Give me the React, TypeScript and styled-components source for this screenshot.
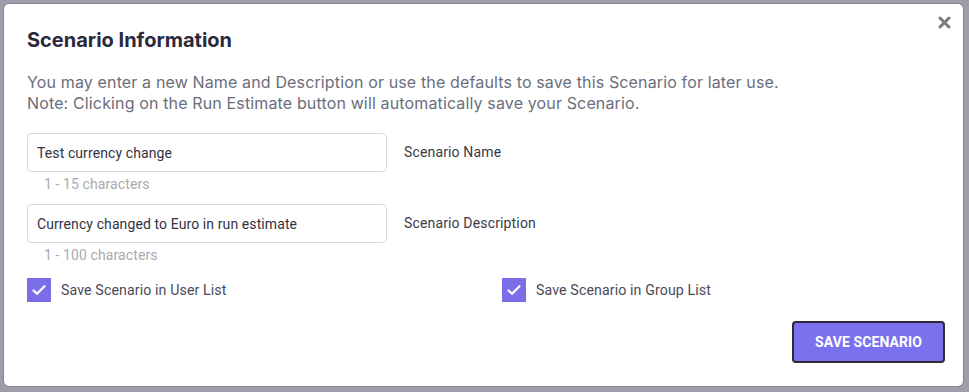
import React, { useState } from 'react';
import styled, { createGlobalStyle } from 'styled-components';

const GlobalStyle = createGlobalStyle`
  html, body {
    margin: 0;
    padding: 0;
    background: #9d9ea9;
    font-family: Roboto, "Liberation Sans", sans-serif;
  }
`;

const Backdrop = styled.div`
  width: 969px;
  height: 392px;
  box-sizing: border-box;
  padding: 4px 6px 6px 4px;
`;

const Dialog = styled.div`
  position: relative;
  box-sizing: border-box;
  width: 959px;
  height: 382px;
  background: #fff;
  border-radius: 5px;
  box-shadow: 0 0 0 1px #85868f;
  padding: 22px 18px 0 23px;
  display: flex;
  flex-direction: column;
`;

const Close = styled.button`
  position: absolute;
  top: 8px;
  right: 9px;
  border: none;
  background: none;
  padding: 0;
  width: 20px;
  height: 20px;
  display: flex;
  align-items: center;
  justify-content: center;
  cursor: pointer;
`;

const Title = styled.h2`
  margin: 0;
  font-family: Inter, Roboto, sans-serif;
  font-size: 20px;
  font-weight: 700;
  line-height: 28px;
  color: #2b2a3d;
`;

const Intro = styled.p`
  margin: 18px 0 0;
  font-family: Inter, Roboto, sans-serif;
  font-size: 16px;
  line-height: 21px;
  letter-spacing: 0.14px;
  color: #6b6e7b;
`;

const FieldRow = styled.div<{ $top: number }>`
  display: flex;
  align-items: flex-start;
  margin-top: ${p => p.$top}px;
`;

const FieldCol = styled.div`
  display: flex;
  flex-direction: column;
  width: 360px;
`;

const Input = styled.input`
  box-sizing: border-box;
  width: 360px;
  height: 39px;
  border: 1px solid #d9d9df;
  border-radius: 4px;
  padding: 0 9px;
  font-family: Roboto, "Liberation Sans", sans-serif;
  font-size: 14px;
  letter-spacing: 0.1px;
  color: #33323f;
  outline: none;
`;

const Helper = styled.span`
  margin: 4px 0 0 17px;
  font-size: 14px;
  line-height: 16px;
  letter-spacing: 0.1px;
  color: #a9a9b1;
`;

const FieldLabel = styled.span`
  margin-left: 17px;
  line-height: 39px;
  font-size: 14px;
  letter-spacing: 0.15px;
  color: #3b3a48;
`;

const Checks = styled.div`
  display: flex;
  margin-top: 15px;
`;

const CheckItem = styled.label<{ $width: number }>`
  display: flex;
  align-items: center;
  width: ${p => p.$width}px;
  gap: 10px;
  font-size: 14.2px;
  letter-spacing: 0.1px;
  color: #4a4a58;
  cursor: pointer;
`;

const Box = styled.span<{ $on: boolean }>`
  width: 24px;
  height: 24px;
  background: ${p => (p.$on ? '#7b6fe9' : '#fff')};
  border: ${p => (p.$on ? 'none' : '2px solid #7b6fe9')};
  box-sizing: border-box;
  display: flex;
  align-items: center;
  justify-content: center;
`;

const Footer = styled.div`
  display: flex;
  justify-content: flex-end;
  margin-top: 19px;
`;

const SaveButton = styled.button`
  width: 153px;
  height: 42px;
  box-sizing: border-box;
  background: #7b70ee;
  border: 2px solid #2d2c36;
  border-radius: 4px;
  color: #fff;
  font-family: Roboto, "Liberation Sans", sans-serif;
  font-size: 14px;
  font-weight: 700;
  letter-spacing: 0.1px;
  cursor: pointer;
`;

const Check = ({ on, label, width, onToggle }: { on: boolean; label: string; width: number; onToggle: () => void }) => (
  <CheckItem $width={width} onClick={onToggle}>
    <Box $on={on}>
      {on && (
        <svg width="16" height="12" viewBox="0 0 16 12">
          <path d="M2.5 6.5 L6 9.8 L13.5 2.2" fill="none" stroke="#fff" strokeWidth="2.2" strokeLinecap="round" strokeLinejoin="round" />
        </svg>
      )}
    </Box>
    {label}
  </CheckItem>
);

export default function App() {
  const [name, setName] = useState('Test currency change');
  const [desc, setDesc] = useState('Currency changed to Euro in run estimate');
  const [userList, setUserList] = useState(true);
  const [groupList, setGroupList] = useState(true);

  return (
    <Backdrop>
      <GlobalStyle />
      <Dialog>
        <Close aria-label="close">
          <svg width="13" height="13" viewBox="0 0 13 13">
            <path d="M2 2 L11 11 M11 2 L2 11" stroke="#7a7a80" strokeWidth="3" strokeLinecap="round" />
          </svg>
        </Close>
        <Title>Scenario Information</Title>
        <Intro>
          You may enter a new Name and Description or use the defaults to save this Scenario for later use.
          <br />
          Note: Clicking on the Run Estimate button will automatically save your Scenario.
        </Intro>
        <FieldRow $top={19}>
          <FieldCol>
            <Input value={name} onChange={e => setName(e.target.value)} />
            <Helper>1 - 15 characters</Helper>
          </FieldCol>
          <FieldLabel>Scenario Name</FieldLabel>
        </FieldRow>
        <FieldRow $top={12}>
          <FieldCol>
            <Input value={desc} onChange={e => setDesc(e.target.value)} />
            <Helper>1 - 100 characters</Helper>
          </FieldCol>
          <FieldLabel>Scenario Description</FieldLabel>
        </FieldRow>
        <Checks>
          <Check on={userList} label="Save Scenario in User List" width={475} onToggle={() => setUserList(!userList)} />
          <Check on={groupList} label="Save Scenario in Group List" width={300} onToggle={() => setGroupList(!groupList)} />
        </Checks>
        <Footer>
          <SaveButton>SAVE SCENARIO</SaveButton>
        </Footer>
      </Dialog>
    </Backdrop>
  );
}
